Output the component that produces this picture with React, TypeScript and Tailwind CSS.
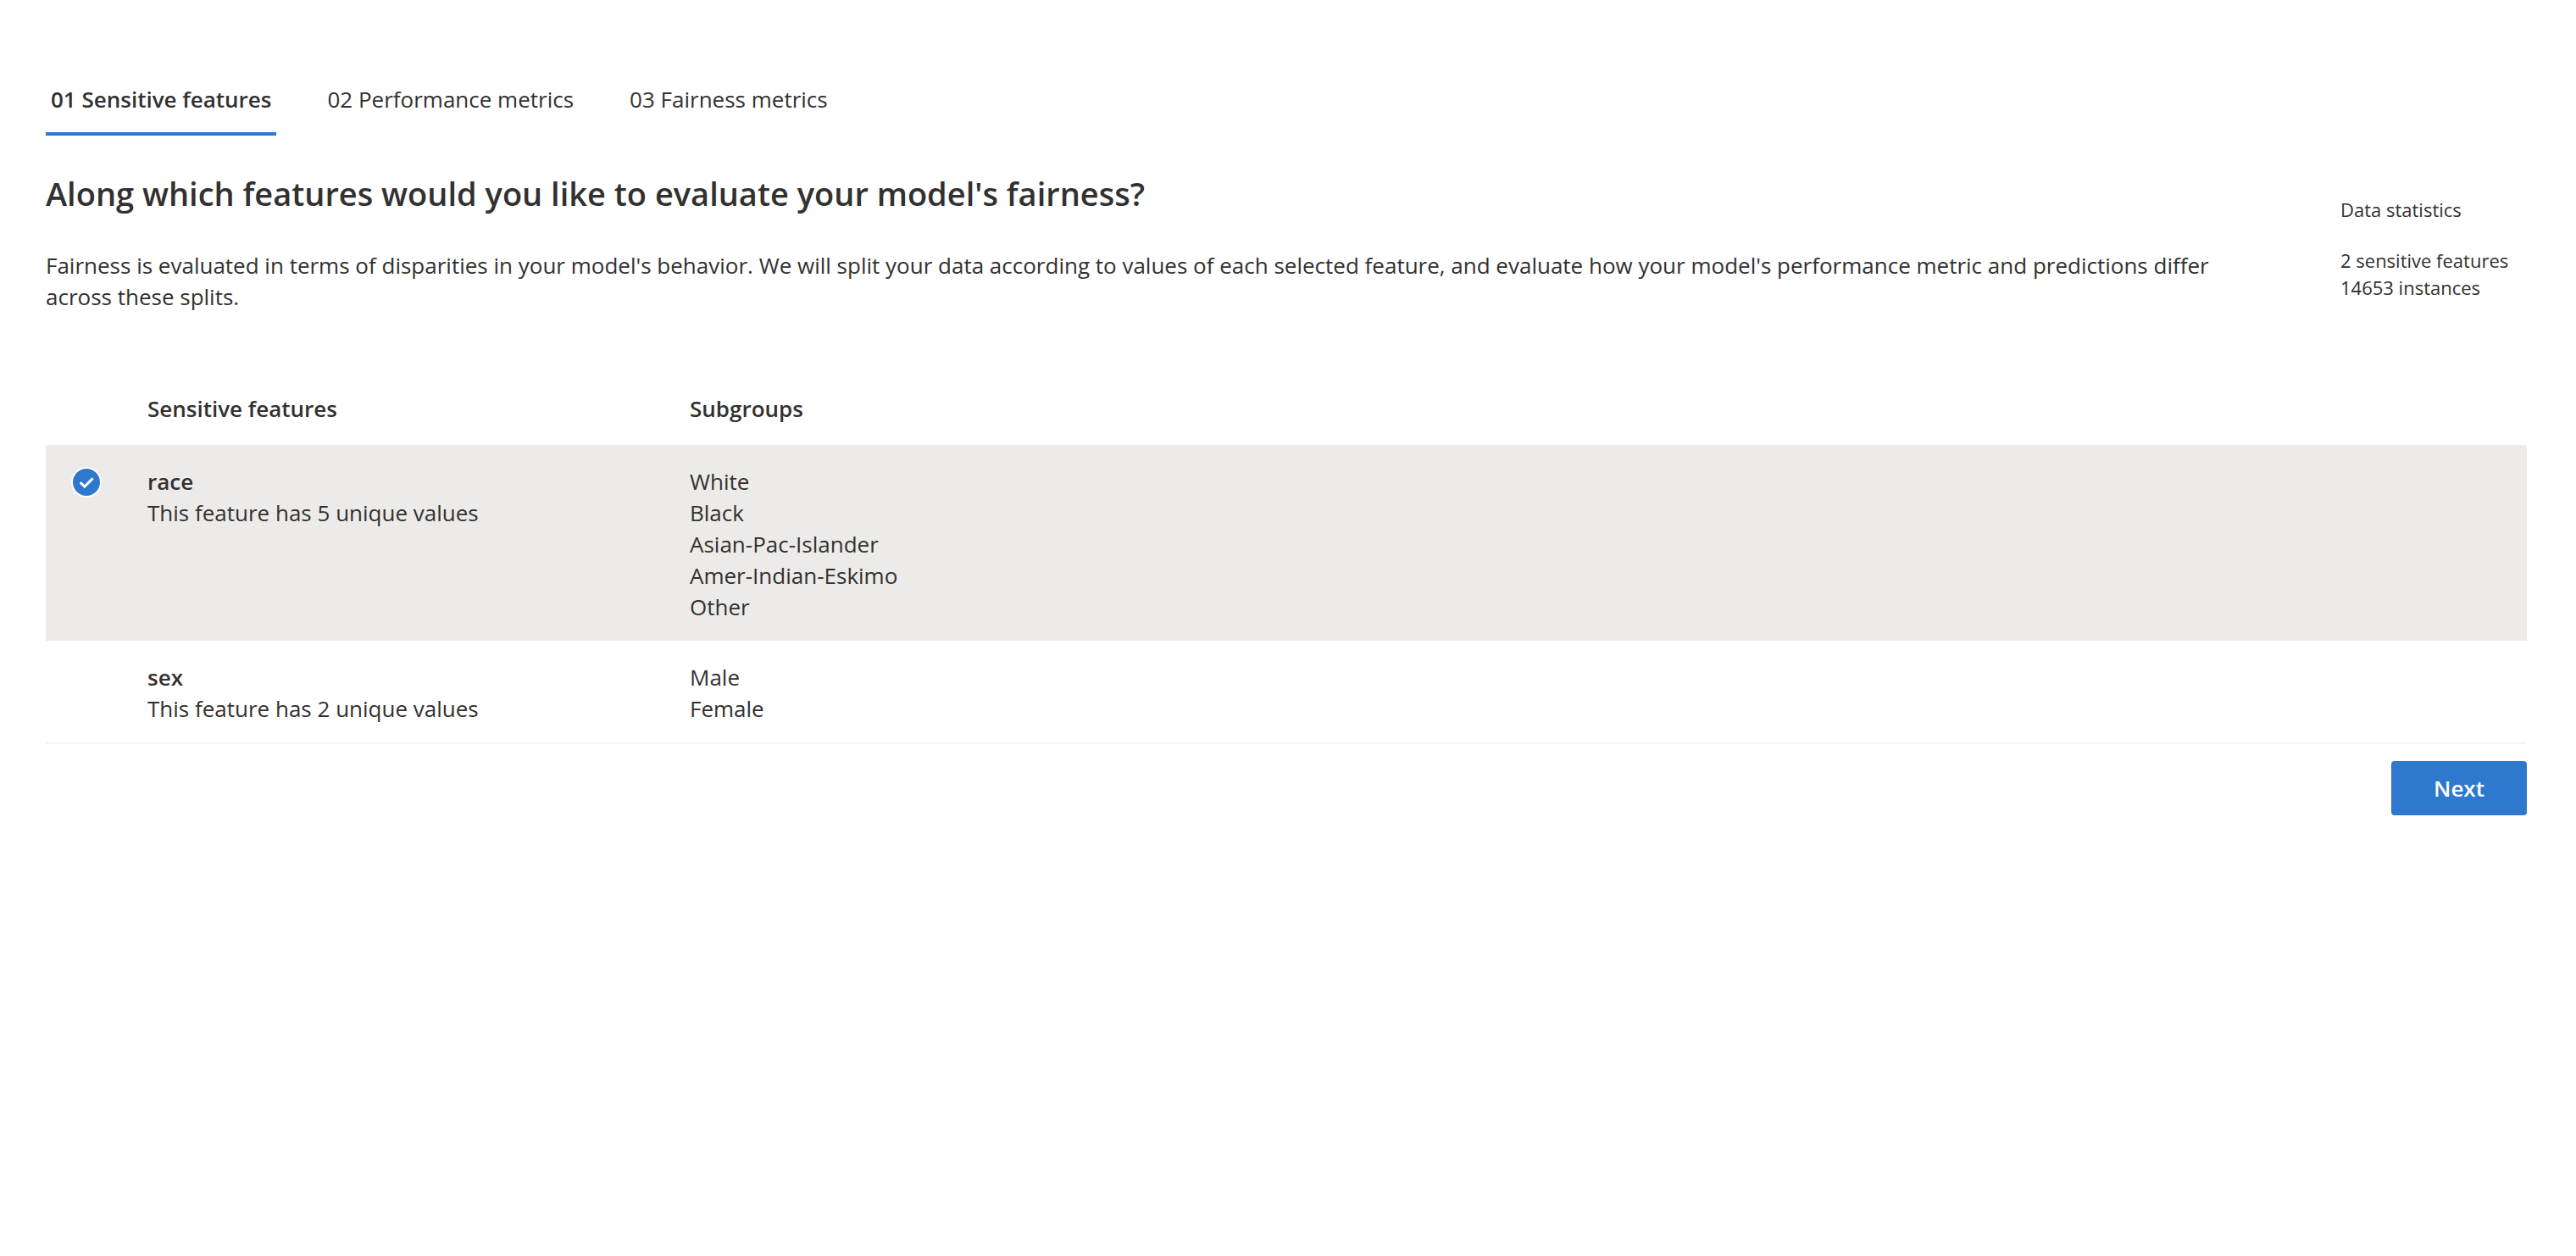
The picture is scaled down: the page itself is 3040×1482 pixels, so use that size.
import { useState } from "react";

const features = [
  { name: "race", values: ["White", "Black", "Asian-Pac-Islander", "Amer-Indian-Eskimo", "Other"] },
  { name: "sex", values: ["Male", "Female"] },
];
const tabs = ["01 Sensitive features", "02 Performance metrics", "03 Fairness metrics"];

export default function App() {
  const [selected, setSelected] = useState<string[]>(["race"]);
  const toggle = (name: string) =>
    setSelected((current) => (current.includes(name) ? current.filter((n) => n !== name) : [...current, name]));

  return (
    <main className="pt-[76px] pr-[58px] pb-12 pl-[54px] font-['Open_Sans','Noto_Sans',sans-serif] text-[26px] leading-[37px] text-[#323130]">
      <div role="tablist" className="flex gap-[54px]">
        {tabs.map((tab, i) => (
          <button
            key={tab}
            type="button"
            role="tab"
            aria-selected={i === 0}
            className={
              i === 0
                ? "h-[84px] border-b-4 border-[#2e78cd] px-1.5 pt-0.5 font-semibold"
                : "h-[84px] border-b-4 border-transparent px-1.5 pt-0.5"
            }
          >
            {tab}
          </button>
        ))}
      </div>

      <header className="flex justify-between">
        <div className="mr-28 pt-[43px]">
          <h1 className="text-[38px] leading-[50px] font-semibold">
            Along which features would you like to evaluate your model's fairness?
          </h1>
          <p className="mt-[42px]">
            Fairness is evaluated in terms of disparities in your model's behavior. We will split your data according to
            values of each selected feature, and evaluate how your model's performance metric and predictions differ
            across these splits.
          </p>
        </div>
        <aside className="w-[220px] shrink-0 pt-[71px] text-[22px] leading-[32px]">
          <h2>Data statistics</h2>
          <p className="mt-7">2 sensitive features</p>
          <p>14653 instances</p>
        </aside>
      </header>

      <table className="mt-[70px] w-full table-fixed border-separate border-spacing-0 text-left">
        <colgroup>
          <col className="w-[120px]" />
          <col className="w-[640px]" />
          <col />
        </colgroup>
        <thead>
          <tr className="h-[86px]">
            <td></td>
            <th scope="col" className="font-semibold">Sensitive features</th>
            <th scope="col" className="font-semibold">Subgroups</th>
          </tr>
        </thead>
        <tbody>
          {features.map((feature, i) => {
            const id = `feature-${feature.name}`;
            const last = i === features.length - 1;
            const line = last ? "border-b-2 border-[#f3f2f1] pb-[21px]" : "pb-[21px]";
            return (
              <tr key={feature.name} className={selected.includes(feature.name) ? "bg-[#ecebe9] align-top" : "align-top"}>
                <td className={`${line} pt-[26px] pl-[30px]`}>
                  <div className="relative size-9">
                    <input
                      id={id}
                      type="checkbox"
                      checked={selected.includes(feature.name)}
                      onChange={() => toggle(feature.name)}
                      className="peer block size-9 appearance-none rounded-full border-2 border-transparent checked:border-white checked:bg-[#2e78cd]"
                    />
                    <svg
                      aria-hidden="true"
                      viewBox="0 0 36 36"
                      className="pointer-events-none absolute inset-0 size-9 opacity-0 peer-checked:opacity-100"
                      fill="none"
                      stroke="white"
                      strokeWidth="3"
                    >
                      <path d="M10.8 18.2 L15.8 23.2 L25.6 13.4" />
                    </svg>
                  </div>
                </td>
                <td className={`${line} pt-[25px]`}>
                  <label htmlFor={id} className="block font-semibold">{feature.name}</label>
                  <p>This feature has {feature.values.length} unique values</p>
                </td>
                <td className={`${line} pt-[25px]`}>
                  {feature.values.map((value) => (
                    <p key={value}>{value}</p>
                  ))}
                </td>
              </tr>
            );
          })}
        </tbody>
      </table>

      <div className="mt-5 flex justify-end">
        <button type="button" className="h-16 w-40 rounded bg-[#2e78cd] font-semibold text-white">Next</button>
      </div>
    </main>
  );
}
